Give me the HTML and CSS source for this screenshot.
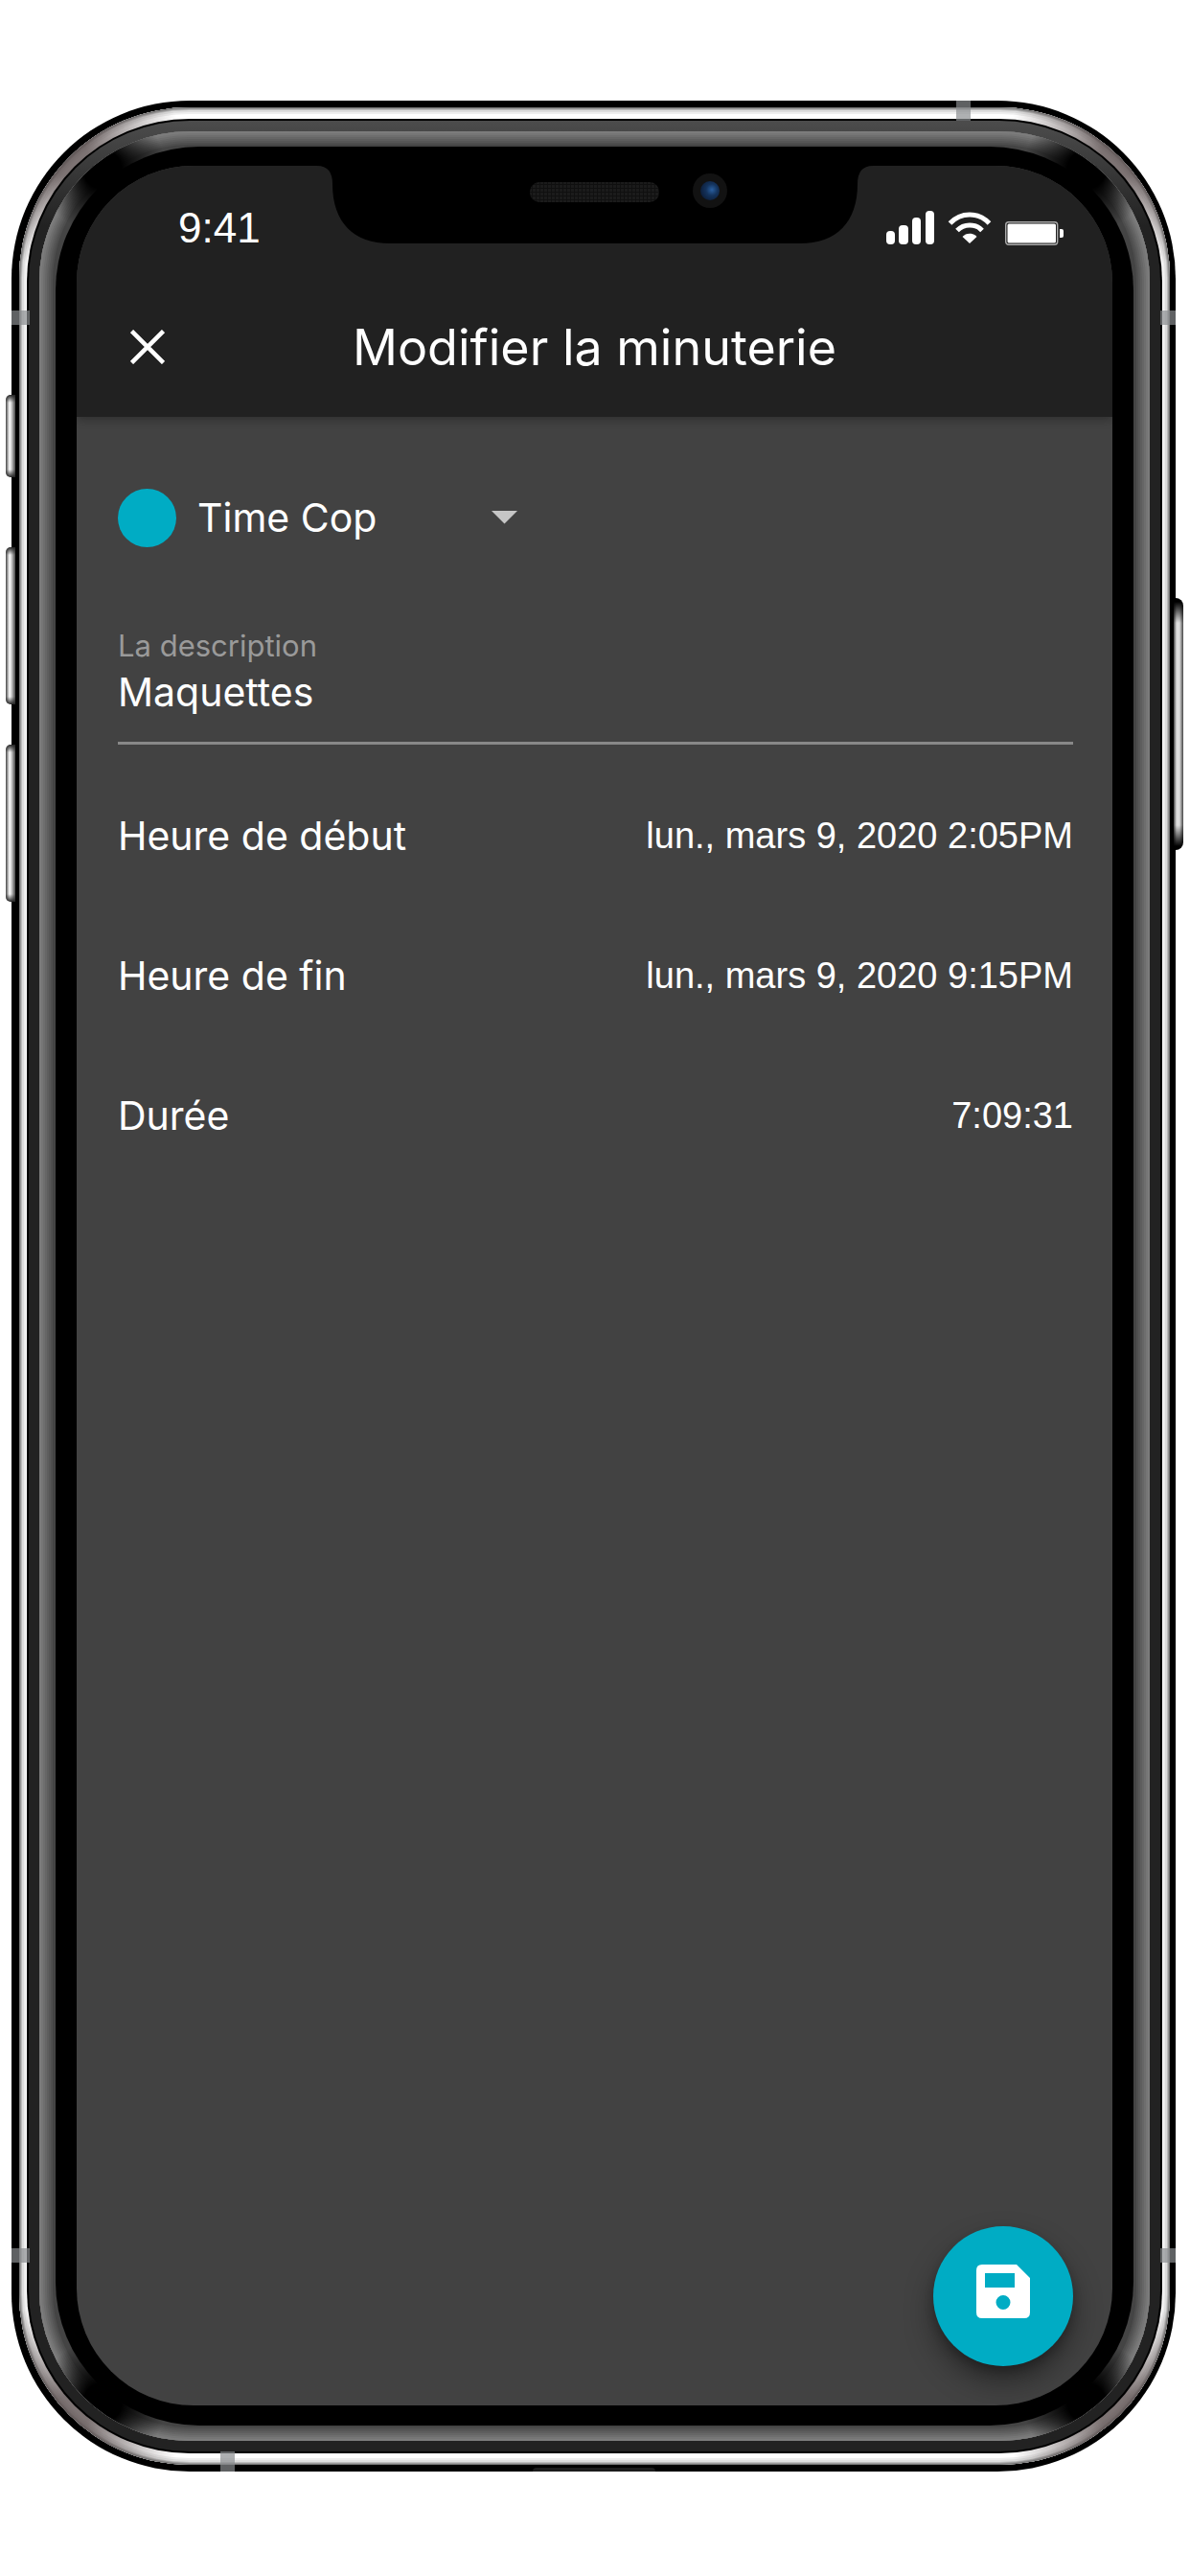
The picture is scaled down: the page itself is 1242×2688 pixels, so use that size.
FILE: index.html
```html
<!DOCTYPE html>
<html lang="fr">
<head>
<meta charset="utf-8">
<meta name="viewport" content="width=device-width, initial-scale=1">
<title>Modifier la minuterie</title>
<link rel="stylesheet" href="styles.css">
</head>
<body>
<div class="stage">
  <div class="phone">
    <span class="key key-mute"></span>
    <span class="key key-up"></span>
    <span class="key key-down"></span>
    <span class="key key-power"></span>
    <div class="steel">
      <div class="seam">
        <div class="rim">
          <div class="glass">
            <div class="bezel">
              <div class="screen">
                <header class="header">
                  <div class="status">
                    <span class="clock">9:41</span>
                    <span class="indicators">
                      <svg width="50" height="36" viewBox="0 0 50 36" fill="#fff" aria-hidden="true"><rect x="0" y="21" width="9" height="14" rx="4"/><rect x="13" y="15" width="10" height="20" rx="4"/><rect x="27" y="7" width="9" height="28" rx="4"/><rect x="41" y="0" width="9" height="35" rx="4"/></svg>
                      <svg width="46" height="36" viewBox="0 0 46 36" aria-hidden="true"><path d="M2.500 13C14 1 32 1 43.500 13M10 20.500C17 13 29 13 36 20.500" fill="none" stroke="#fff" stroke-width="5"/><path d="M23 34 15.500 27C19 22.500 27 22.500 30.500 27Z" fill="#fff"/></svg>
                      <svg width="61" height="36" viewBox="0 0 61 36" aria-hidden="true"><rect x="0.700" y="11.700" width="54" height="23.600" rx="3" fill="none" stroke="#aaa" stroke-width="1.400"/><rect x="2.500" y="13.500" width="50.500" height="20" rx="1.500" fill="#fff"/><path d="M57 19h2q2 0 2 2v5q0 2-2 2h-2z" fill="#fff"/></svg>
                    </span>
                  </div>
                  <div class="appbar">
                    <button class="close" type="button" aria-label="Fermer"><svg width="36" height="36" viewBox="0 0 36 36" aria-hidden="true"><path d="M1.500 1.500 34.500 34.500M34.500 1.500 1.500 34.500" stroke="#fff" stroke-width="4.500"/></svg></button>
                    <h1 class="title">Modifier la minuterie</h1>
                  </div>
                </header>
                <form class="form">
                  <div class="project">
                    <span class="swatch"></span>
                    <div class="picker">
                      <select class="select" aria-label="Projet"><option>Time Cop</option></select>
                      <svg class="arrow" width="27" height="14" viewBox="0 0 27 14" aria-hidden="true"><path d="M0 0H27L13.500 13.500Z" fill="#c6c6c6"/></svg>
                    </div>
                  </div>
                  <div class="field">
                    <label class="label" for="description">La description</label>
                    <input class="input" id="description" type="text" value="Maquettes">
                  </div>
                  <button class="row" type="button"><span>Heure de début</span><span class="value">lun., mars 9, 2020 2:05PM</span></button>
                  <button class="row" type="button"><span>Heure de fin</span><span class="value">lun., mars 9, 2020 9:15PM</span></button>
                  <button class="row" type="button"><span>Durée</span><span class="value">7:09:31</span></button>
                </form>
                <div class="actions">
                  <button class="fab" type="button" aria-label="Enregistrer"><svg width="56" height="56" viewBox="0 0 56 56" aria-hidden="true"><path fill="#fff" fill-rule="evenodd" d="M6 0H42L56 14V50Q56 56 50 56H6Q0 56 0 50V6Q0 0 6 0ZM9 9V24H40V9ZM28 32A7.500 7.500 0 1 0 28 47A7.500 7.500 0 1 0 28 32Z"/></svg></button>
                </div>
              </div>
              <svg class="notch" width="580" height="82" viewBox="0 0 580 82" aria-hidden="true">
                <defs>
                  <pattern id="mesh" width="4" height="4" patternUnits="userSpaceOnUse"><rect width="4" height="4" fill="#1b1b1b"/><path d="M0 0H4M0 0V4" stroke="#101010" stroke-width="2"/></pattern>
                  <radialGradient id="lens" cx="0.600" cy="0.450" r="0.600"><stop offset="0" stop-color="#2a5fa0"/><stop offset="0.500" stop-color="#14335c"/><stop offset="1" stop-color="#0d1f3c"/></radialGradient>
                </defs>
                <path d="M0 0V1Q16 1 16 20C16 60 38 82 76 82H504C542 82 564 60 564 20Q564 1 580 1V0Z" fill="#000"/>
                <rect x="222" y="18" width="135" height="21" rx="10" fill="url(#mesh)"/>
                <circle cx="410" cy="27" r="18" fill="#121212"/>
                <circle cx="410" cy="27" r="10" fill="url(#lens)"/>
              </svg>
            </div>
          </div>
        </div>
      </div>
    </div>
    <span class="band band-top"></span>
    <span class="band band-bottom"></span>
    <span class="band band-side band-left band-high"></span>
    <span class="band band-side band-left band-low"></span>
    <span class="band band-side band-right band-high"></span>
    <span class="band band-side band-right band-low"></span>
    <span class="port"></span>
  </div>
</div>
</body>
</html>
```
FILE: styles.css
```css
* { box-sizing: border-box; }

body {
  margin: 0;
  background: #fff;
  color: #fff;
  font-family: Inter, "Liberation Sans", sans-serif;
  font-size: 41px;
}

button, input, select {
  margin: 0;
  padding: 0;
  border: 0;
  background: none;
  color: inherit;
  font: inherit;
}

svg { display: block; }

.stage {
  display: flex;
  min-height: 100vh;
  padding: 105px 15px 109px 12px;
}

/* Phone body: nested rings from the outer edge to the screen */
.phone, .steel, .seam, .rim, .glass, .bezel, .screen {
  display: flex;
  flex: 1;
  flex-direction: column;
  min-width: 0;
}

.phone {
  position: relative;
  padding: 7px 6px 7px 8px;
  border-radius: 186px;
  background: #000;
}

.steel {
  position: relative;
  padding: 12px 8px 12px 8px;
  border-radius: 178px;
  background: #fff;
  box-shadow: inset 0 0 0 1px #777, inset 0 0 0 2px #999, inset 0 0 0 3px #bbb, inset 0 0 0 5px #ddd, inset 0 0 0 7px #eee;
}

.steel::before, .glass::before {
  content: "";
  position: absolute;
  inset: 0;
  border-radius: inherit;
}

.steel::before {
  background:
    radial-gradient(circle at 52px 52px, #5c5050cc 0 20px, #5c505000 120px),
    radial-gradient(circle at calc(100% - 52px) 52px, #5c5050cc 0 20px, #5c505000 120px),
    radial-gradient(circle at 52px calc(100% - 52px), #5c5050cc 0 20px, #5c505000 120px),
    radial-gradient(circle at calc(100% - 52px) calc(100% - 52px), #5c5050cc 0 20px, #5c505000 120px);
}

.seam {
  position: relative;
  padding: 2px;
  border-radius: 170px;
  background: #000;
}

.rim {
  padding: 11px;
  border-radius: 168px;
  background: linear-gradient(#4c4c4c, #222 110px);
}

.glass {
  position: relative;
  padding: 16px 17px;
  border-radius: 157px;
  background: #444;
  box-shadow: inset 0 0 0 2px #7c7c7c, inset 0 0 0 4px #767676, inset 0 0 0 6px #6e6e6e, inset 0 0 0 8px #666, inset 0 0 0 10px #5e5e5e, inset 0 0 0 12px #565656, inset 0 0 0 14px #4e4e4e;
}

.glass::before {
  background:
    radial-gradient(circle at 66px 40px, #000 0 20px, #0000 66px),
    radial-gradient(circle at calc(100% - 66px) 40px, #000 0 20px, #0000 66px),
    radial-gradient(circle at 66px calc(100% - 40px), #000 0 20px, #0000 66px),
    radial-gradient(circle at calc(100% - 66px) calc(100% - 40px), #000 0 20px, #0000 66px);
}

.bezel {
  position: relative;
  padding: 20px 22px 21px 22px;
  border-radius: 150px;
  background: #000;
}

.screen {
  overflow: hidden;
  border-radius: 122px;
  background: #424242;
}

.notch {
  position: absolute;
  top: 19px;
  left: 50%;
  transform: translateX(-50%);
}

.key {
  position: absolute;
  left: -6px;
  width: 10px;
  height: 164px;
  border-radius: 5px 0 0 5px;
  background: linear-gradient(#222, #0000 8px calc(100% - 8px), #222), linear-gradient(90deg, #444, #fff 40%, #ccc 60%, #444);
}

.key-mute { top: 307px; height: 86px; }
.key-up { top: 466px; }
.key-down { top: 672px; }

.key-power {
  top: 519px;
  right: -8px;
  left: auto;
  height: 263px;
  border-radius: 0 8px 8px 0;
  background: linear-gradient(#000 4px, #0000 26px calc(100% - 26px), #000 calc(100% - 4px)), linear-gradient(90deg, #444, #ddd 30% 60%, #444);
}

.band {
  position: absolute;
  width: 15px;
  height: 21px;
  background: #8a8d8fb0;
}

.band-top { top: 0; right: 214px; }
.band-bottom { bottom: 0; left: 218px; }
.band-side { width: 19px; height: 15px; }
.band-left { left: 0; }
.band-right { right: 0; width: 16px; }
.band-high { top: 219px; }
.band-low { bottom: 218px; }

.port {
  position: absolute;
  bottom: 0;
  left: 50%;
  width: 128px;
  height: 4px;
  border-radius: 6px 6px 0 0;
  background: #1c1c1c;
  transform: translateX(-50%);
}

/* Screen content */
.header {
  background: #212121;
  box-shadow: 0 2px 10px #0005;
}

.status {
  display: flex;
  align-items: center;
  justify-content: space-between;
  height: 116px;
  padding: 14px 51px 0 106px;
}

.clock {
  font-family: "Liberation Sans", sans-serif;
  font-size: 44px;
}

.indicators {
  display: flex;
  gap: 14px;
}

.appbar {
  display: grid;
  grid-template-columns: 92px 1fr 92px;
  align-items: center;
  height: 146px;
}

.close {
  justify-self: end;
  padding: 0;
}

.title {
  margin: 0;
  font-size: 52px;
  font-weight: 400;
  text-align: center;
}

.form {
  display: flex;
  flex-direction: column;
  padding: 32px 41px 0 43px;
}

.project {
  display: flex;
  align-items: center;
  gap: 22px;
  height: 146px;
}

.swatch {
  width: 61px;
  height: 61px;
  border-radius: 50%;
  background: #00acc4;
}

.picker {
  display: grid;
  align-items: center;
  width: 334px;
}

.select, .arrow { grid-area: 1 / 1; }

.select {
  appearance: none;
  line-height: 56px;
}

.arrow {
  justify-self: end;
  pointer-events: none;
}

.field {
  display: flex;
  flex-direction: column;
  margin-bottom: 22px;
  padding: 41px 0 24px;
  border-bottom: 3px solid #888;
}

.label {
  color: #9a9a9a;
  font-size: 31px;
  line-height: 40px;
}

.input {
  width: 100%;
  height: 56px;
}

.row {
  display: flex;
  align-items: center;
  justify-content: space-between;
  height: 146px;
  text-align: left;
}

.value {
  font-family: "Liberation Sans", sans-serif;
  font-size: 38px;
}

.actions {
  display: flex;
  justify-content: flex-end;
  margin-top: auto;
  padding: 0 41px 41px;
}

.fab {
  display: flex;
  align-items: center;
  justify-content: center;
  width: 146px;
  height: 146px;
  padding-bottom: 10px;
  border-radius: 50%;
  background: #00acc4;
  box-shadow: 0 16px 30px #0006, 0 6px 10px #0003;
}
```
